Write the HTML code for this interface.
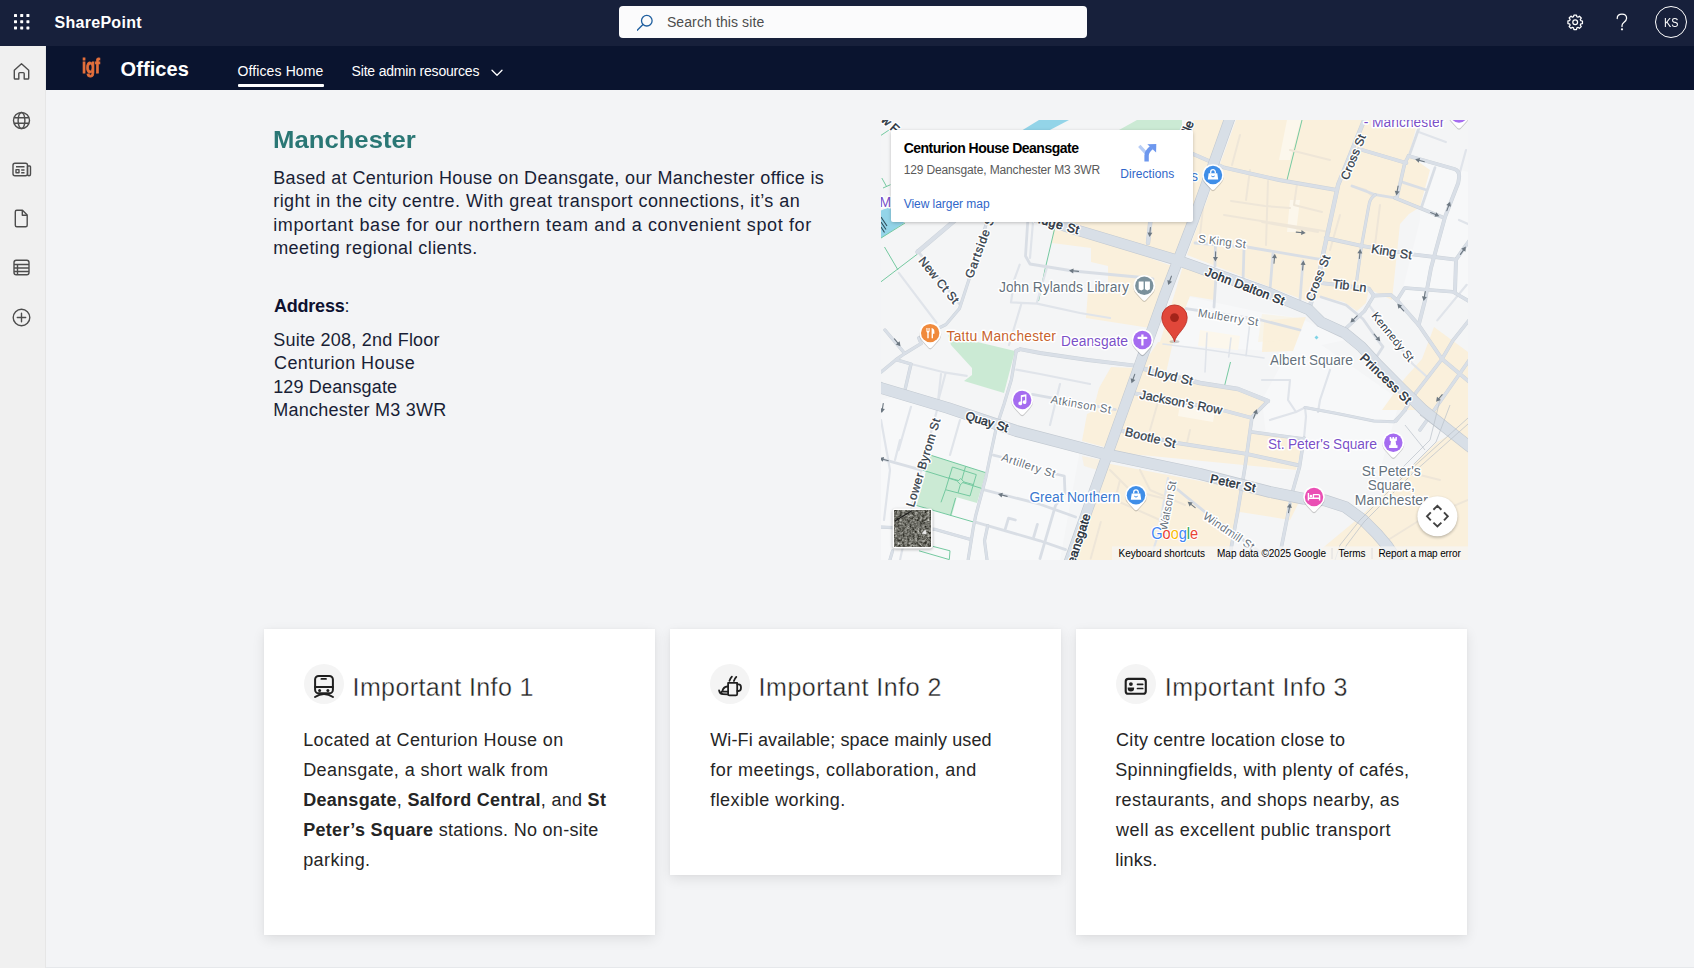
<!DOCTYPE html>
<html lang="en">
<head>
<meta charset="utf-8">
<title>Offices - Manchester</title>
<style>
*{box-sizing:border-box;margin:0;padding:0}
html,body{width:1694px;height:968px;overflow:hidden;background:#f3f4f6;font-family:"Liberation Sans",sans-serif;}
body{position:relative}
#top{position:absolute;left:0;top:0;width:1694px;height:46px;background:#17203b}
#hdr{position:absolute;left:46px;top:46px;width:1648px;height:43.500px;background:#0a142f}
#side{position:absolute;left:0;top:46px;width:46px;height:923px;background:#f0f0f0;border-right:1px solid #e6e6e6}
.t{position:absolute;white-space:nowrap}
.abs{position:absolute}
#search{position:absolute;left:619px;top:6px;width:468px;height:32px;background:#fbfbfc;border-radius:4px}
.card{position:absolute;background:#fff;box-shadow:0 4px 12px rgba(0,0,0,.09),0 0 3px rgba(0,0,0,.04)}
.ic{position:absolute;width:40px;height:40px;border-radius:50%;background:#f4f4f4}
#botline{position:absolute;left:46px;top:967px;width:1648px;height:1px;background:#e6e8eb}
</style>
</head>
<body>
<div id="top">
  <svg class="abs" style="left:13px;top:13px" width="18" height="18" viewBox="0 0 18 18" fill="#fff">
    <rect x="1" y="1" width="3" height="3" rx=".6"/><rect x="7.2" y="1" width="3" height="3" rx=".6"/><rect x="13.4" y="1" width="3" height="3" rx=".6"/>
    <rect x="1" y="7.2" width="3" height="3" rx=".6"/><rect x="7.2" y="7.2" width="3" height="3" rx=".6"/><rect x="13.4" y="7.2" width="3" height="3" rx=".6"/>
    <rect x="1" y="13.4" width="3" height="3" rx=".6"/><rect x="7.2" y="13.4" width="3" height="3" rx=".6"/><rect x="13.4" y="13.4" width="3" height="3" rx=".6"/>
  </svg>
  <div id="search">
    <svg class="abs" style="left:18px;top:8px" width="17" height="17" viewBox="0 0 17 17" fill="none" stroke="#1f5f9f" stroke-width="1.3" stroke-linecap="round"><circle cx="9.800" cy="6.700" r="5.300"/><path d="M6 10.500 0 16.500"/></svg>
  </div>
  <svg class="abs" style="left:1565.600px;top:12.700px" width="18.400" height="18.400" viewBox="0 0 20 20" fill="none" stroke="#fff" stroke-width="1.35" stroke-linejoin="round">
    <path d="M8.6 2.2h2.8l.4 1.9 1.2.5 1.6-1.1 2 2-1.1 1.6.5 1.2 1.9.4v2.8l-1.9.4-.5 1.2 1.1 1.6-2 2-1.6-1.1-1.2.5-.4 1.9H8.600l-.4-1.9-1.200-.5-1.600 1.100-2-2 1.100-1.600-.5-1.200-1.900-.4V8.600l1.900-.4.5-1.200-1.100-1.600 2-2 1.600 1.100 1.200-.5z"/>
    <circle cx="10" cy="10" r="2.6"/>
  </svg>
  <svg class="abs" style="left:1616.300px;top:13px" width="12" height="18" viewBox="0 0 12 18" fill="none" stroke="#fff" stroke-width="1.250" stroke-linecap="round"><path d="M1.200 5.600C1.200 2.600 3.400 1.200 6 1.200C8.800 1.200 10.600 3 10.600 5.300C10.600 7.400 9.200 8.500 7.800 9.600C6.600 10.600 6 11.400 6 12.800V13.500"/><circle cx="6" cy="16.300" r=".5" /></svg>
  <div class="abs" style="left:1655px;top:6px;width:32px;height:32px;border-radius:50%;border:1.3px solid #fff"></div>
</div>
<div id="hdr">
  <div class="abs" style="left:191.500px;top:38px;width:86.500px;height:3px;background:#fff;border-radius:1px"></div>
  <svg class="abs" style="left:444.700px;top:23px" width="12" height="8" viewBox="0 0 12 8" fill="none" stroke="#fff" stroke-width="1.3" stroke-linecap="round" stroke-linejoin="round"><path d="M1 1.200 6 6.300 11 1.200"/></svg>
</div>
<div id="side">
  <svg class="abs" style="left:11px;top:14.5px" width="21" height="21" viewBox="0 0 21 21" fill="none" stroke="#4d4d4d" stroke-width="1.4" stroke-linejoin="round" stroke-linecap="round"><path d="M3.300 9.200 10.500 2.800 17.700 9.200V17.200a.8.800 0 0 1-.8.800H13.200V12.600a1 1 0 0 0-1-1H8.800a1 1 0 0 0-1 1V18H4.100a.8.800 0 0 1-.8-.8z"/></svg>
  <svg class="abs" style="left:11px;top:64.0px" width="21" height="21" viewBox="0 0 21 21" fill="none" stroke="#4d4d4d" stroke-width="1.4"><circle cx="10.500" cy="10.500" r="8"/><ellipse cx="10.500" cy="10.500" rx="3.400" ry="8"/><path d="M3 7.700h15M3 13.300h15"/></svg>
  <svg class="abs" style="left:11px;top:112.5px" width="21" height="21" viewBox="0 0 21 21" fill="none" stroke="#4d4d4d" stroke-width="1.4" stroke-linejoin="round"><rect x="2" y="4.200" width="14.500" height="12.600" rx="2"/><path d="M16.500 7v8.300a1.500 1.500 0 0 0 3 0V7.800a.8.800 0 0 0-.8-.8z" /><path d="M5 7.800h8.500M10.200 11h3.300M10.200 13.800h3.300"/><rect x="5" y="10.600" width="3" height="3.200"/></svg>
  <svg class="abs" style="left:11px;top:162.0px" width="21" height="21" viewBox="0 0 21 21" fill="none" stroke="#4d4d4d" stroke-width="1.4" stroke-linejoin="round"><path d="M5.800 2.300h5.700l4.700 4.700v10.200a1.500 1.500 0 0 1-1.500 1.500H5.800a1.500 1.500 0 0 1-1.500-1.500V3.800a1.500 1.500 0 0 1 1.500-1.500z"/><path d="M11.300 2.500V7.200h4.700"/></svg>
  <svg class="abs" style="left:11px;top:211.0px" width="21" height="21" viewBox="0 0 21 21" fill="none" stroke="#4d4d4d" stroke-width="1.4" stroke-linejoin="round"><rect x="3" y="3.200" width="15" height="14.600" rx="2.200"/><path d="M3 7.500h15M3 11h15M3 14.500h15M6.500 7.500v10.300"/></svg>
  <svg class="abs" style="left:11px;top:260.5px" width="21" height="21" viewBox="0 0 21 21" fill="none" stroke="#4d4d4d" stroke-width="1.4" stroke-linecap="round"><circle cx="10.500" cy="10.500" r="8.300"/><path d="M10.500 6.300v8.400M6.300 10.500h8.400"/></svg>
</div>
<div id="botline"></div>
<div class="card" style="left:263.5px;top:628.5px;width:391px;height:306px"></div>
<div class="card" style="left:669.5px;top:628.5px;width:391.700px;height:246.500px"></div>
<div class="card" style="left:1076px;top:628.5px;width:391.300px;height:306px"></div>
<div class="ic" style="left:303.700px;top:664px"></div>
<div class="ic" style="left:710px;top:664.100px"></div>
<div class="ic" style="left:1116.100px;top:664.100px"></div>
<svg class="abs" style="left:881px;top:120px" width="587" height="440" viewBox="881 120 587 440" font-family="Liberation Sans, sans-serif">
<defs>
  <clipPath id="mc"><rect x="881" y="120" width="587" height="440"/></clipPath>
  <g id="arw"><path d="M-4.500 0H2" fill="none" stroke="#6d7882" stroke-width="1.100" stroke-linecap="round"/><path d="M.6-2.500 5 0 .6 2.500Z" fill="#6d7882"/></g>
  <path id="pinp" d="M0-10.800A10.800 10.800 0 0 1 7.600 7.700L1.600 14.300Q0 15.900-1.600 14.300L-7.600 7.700A10.800 10.800 0 0 1 0-10.800Z"/>
</defs>
<g clip-path="url(#mc)">
<rect x="881" y="120" width="587" height="440" fill="#f4f5f6"/>
<!-- whiter blocks -->
<g fill="#f7f8f9">
  <path d="M1185 296 1264 313 1300 318 1345 340 1290 352 1170 345Z"/>
  <path d="M1300 330 1400 400 1380 470 1270 470 1262 400Z"/>
  <path d="M900 395 1080 450 1060 560 881 560 881 400Z"/>
  <path d="M1420 160 1468 172 1468 300 1400 300 1420 220Z"/>
</g>
<!-- beige commercial -->
<g fill="#faf0dc">
  <!-- north of Bridge St / west of Deansgate (mostly behind card) -->
  <path d="M1075 131 1193 131 1193 120 1230 120 1180 258 1070 222Z"/>
  <!-- big NE block -->
  <path d="M1236 120 1418 120 1409 155 1430 170 1420 207 1409 214 1400 224 1392 300 1369 289 1366 303 1357 311 1344 302 1321 297 1309 302 1187 255Z"/>
  <!-- south of Bridge St, west of Deansgate -->
  <path d="M1053 230 1078 232 1172 266 1150 328 1086 318 1088 290 1108 285 1108 266 1091 262 1091 248 1052 243Z"/>
  <!-- east of Deansgate below John Dalton -->
  <path d="M1183 266 1216 279 1214 300 1190 296 1172 342 1160 342Z"/>
  <path d="M1270 320 1306 317 1293 351 1262 352 1264 322Z"/>
  <path d="M1262 314 1300 318 1296 340 1258 342Z" opacity=".55"/>
  <!-- strip west of Deansgate, Lloyd St to Quay St -->
  <path d="M1111 367 1136 368 1108 448 1082 441 1087 414 1093 411 1099 388Z"/>
  <path d="M1082 456 1102 460 1097 470 1084 466Z" opacity=".7"/>
  <!-- east of Deansgate between Lloyd St and Peter St -->
  <path d="M1158 342 1173 342 1166 373 1200 383 1238 389 1268 401 1252 418 1250 431 1304 439 1296 470 1110 452 1142 366Z"/>
  <!-- Great Northern south of Peter St -->
  <path d="M1100 462 1300 500 1290 520 1240 512 1228 560 1070 560Z"/>
  <!-- SE -->
  <path d="M1437 442 1468 425 1468 560 1310 560 1325 546 1360 517Z"/>
  <path d="M1434 327 1468 352 1468 440 1424 410 1382 410 1405 378 1422 359Z"/>
  <path d="M1416 392 1468 440 1468 420 1430 395Z"/>
</g>
<!-- lighter patches in beige -->
<g fill="#fcf7ec">
  <path d="M1287 120 1301 120 1290 160 1279 160Z"/>
  <path d="M1290 200 1300 200 1296 232 1287 232Z"/>
  <path d="M1200 330 1240 336 1238 350 1198 346Z"/>
  <path d="M1180 404 1215 410 1213 422 1178 416Z"/>
</g>
<!-- parks -->
<g fill="#cbead4">
  <path d="M1119 130 1137 120 1182 120 1182 130Z"/>
  <path d="M948 335 1015 351 1004 393 964 381 972 375 972 368 951 345Z"/>
  <path d="M930.400 455.100 985.800 472.700 977 503 956.800 497.300 951.800 515.600 916.500 505.500Z"/>
</g>
<!-- water -->
<g fill="#93d4e8">
  <path d="M1039 120 1069 120 1048 131 1021 131Z"/>
  <path d="M880 211 894 205 904 223 880 239Z"/>
</g>
<path d="M881 217 887 226M881 222 886 229.500M881 227 884.500 232.500" stroke="#2f4d5c" stroke-width="1.100" fill="none"/>
<!-- green paths -->
<g fill="none" stroke="#74c9a0" stroke-width="1">
  <path d="M930.400 455.100 985.800 472.700M916.500 505.500 973.200 521.900M922.800 470.200 982 488.500M952.400 467 976.300 474.600 970 496 945.500 489.700ZM965.600 466.400 958 492.900M948.600 477.800 973.800 484.700M945.500 489.700 941 502.300M955.600 498 950.500 515.600M919 550.800 949.300 559.600 950 550.800 933 546.400"/>
  <path d="M957.500 481.600 960.600 478.500 963.700 481.600 960.600 484.700Z" fill="#cbead4"/>
  <path d="M1302 120 1287 180M1054.500 229 1045.200 268.700 1038.500 301M880 136 889 130M880 282.500 917.500 254M884.500 247 898 270M881.800 178 886.800 187M883 188 890.500 184.700M881 238 905 223M1230.500 362 1224.500 386"/>
</g>
<!-- tier 3: thin light -->
<g fill="none" stroke="#e0e4ea" stroke-width="2.200" stroke-linecap="round" stroke-linejoin="round">
  <path d="M941 374 937 410 925 455 912 505 900 560"/>
  <path d="M900 440 895 460M911 406.800 898.600 450M945.700 372.700 938.200 400.600M911 364 945.700 372.700 966.700 375.800M1016.300 369.700 1040 374 1090 384"/>
  <path d="M1369 305 1412.500 363.800 1428 377.700"/>
  <path d="M1466.700 284.800 1437.300 320.400M1418.700 132 1445.800 142M1459 220 1468 224M1466 150 1460 172"/>
  <path d="M1305 407.500 1306 416.700 1303.500 443.500M1290 380 1288 400 1296 412 1305 407.500M1296 412 1270 420M1330 370 1320 400 1318 412M1262 380 1290 380"/>
  <path d="M1168 478 1158 535 1150 560"/>
  <path d="M1163 344 1202.500 349 1264 358M1207 333 1205 372M1231 338 1228.700 357M1250 322 1246 356" stroke-width="1.600"/>
  <path d="M1019.700 264.700 1014.300 279.500 1011 302.300 1037 303.600 1080 313 1110 318M1046.600 268.700 1037 302.300M1021 305 1009 345M898.800 272.800 936.400 322.500M1033 222 1030 258"/>
  <path d="M881 420 890 470 884 520M960 420 950 455M1060 384 1050 425"/>
</g>
<g fill="none" stroke="#eee6d8" stroke-width="2" stroke-linecap="round" stroke-linejoin="round">
  <path d="M1231 201 1265 206 1290 208M1224 215 1330 232M1268 181 1266 245M1297 184 1294 205 1322 212M1250 170 1246 200M1240 135 1232 165M1330 160 1290 150M1205 190 1200 235M1262 222 1318 232"/>
  <path d="M1352 186 1366 190 1372 196M1340 215 1330 250M1380 205 1375 245"/>
  <path d="M1110 470 1130 490 1170 500M1120 480 1115 500 1160 520M1100.800 522 1090.700 558.500M1140 470 1150 490 1185 505M1190 430 1187 443M1160 395 1150 430"/>
  <path d="M1400 470 1440 480M1420 520 1468 500M1380 545 1420 520"/>
</g>
<!-- tier 2.5 -->
<g fill="none" stroke="#d9dee5" stroke-width="2.800" stroke-linecap="round" stroke-linejoin="round">
  <path d="M881.300 458.900 921.600 470.200M983.300 489.700 1040 504.200 1075.600 517M974.500 521.900 1040 540.800 1065.500 549.600"/>
  <path d="M1015.400 520 1008.500 518.100 1005.300 528.800M1037.400 524.400 1033.700 537M993.400 455.100 1001 457M1055.800 474 1064.300 476 1065 493 1055.500 505.500 1040 558.500"/>
  <path d="M1032.400 394.400 1115.400 409.600"/>
  <path d="M1195 243 1247 247 1315.500 258.600 1325 260"/>
  <path d="M1215.500 243 1215 266M1244 249 1243 282M1273 253 1270 290M1303 261 1300 300"/>
  <path d="M1186 308.600 1261 320 1300 330"/>
  <path d="M1321 297 1346 305 1363 319 1377 339 1383 346.800 1377 356"/>
  <path d="M1403 182.300 1426.500 190M1435 167.600 1421.800 206.300M1418.700 128.800 1409.400 155"/>
  <path d="M1172 485 1205 512 1260 552"/>
  <path d="M917.500 250.700 959.500 304"/>
  <path d="M1027.700 222 1025.500 256 1030 264 1073 271 1137 277 1153 279"/>
  <path d="M1216 276 1214 307M1352 186 1375.300 194.700 1394.700 197.800"/>
</g>
<!-- tier 2 -->
<g fill="none" stroke="#cbd2d9" stroke-width="3.87" stroke-linecap="round" stroke-linejoin="round">
  <path d="M1365 118 1338.200 184.600 1323.400 252.800 1318 280 1310 306" stroke-width="4.4"/>
  <path d="M1170 150 1193 154 1224.500 167.700 1279 180 1336.600 190"/>
  <path d="M1359 149 1406.300 163M1408.600 156 1454.300 169Q1460 171 1459 178L1458.200 183 1445 217 1431 268 1425 300.300 1418.700 325"/>
  <path d="M1408.600 156 1404.800 163 1397 197M1394.700 197.800 1442 217" stroke-width="3.52"/>
  <path d="M1375.300 194.700Q1370 198 1369 204.800L1361.400 246.600 1356.800 280" stroke-width="3.08"/>
  <path d="M1325.800 238 1361.400 245.800 1412.500 254.300 1456 259.700 1465 246.600 1470 240M1456 259.700 1455 291.800"/>
  <path d="M1322 283.200 1369 288.700 1373.800 295.600 1390.800 294.900 1397 300.300 1418.700 325 1442 359 1470 382.400"/>
  <path d="M1373.800 295.600 1364.500 311 1344.400 329.700M1397 300.300 1404.800 287.900 1452.800 291.800 1470 301.800" stroke-width="3.52"/>
  <path d="M1442 359 1415.600 393.200 1404.800 410 1396 421M1470 319 1452.800 340.600 1442 359M1470 359 1434.200 410 1420 430" stroke-width="3.52"/>
  <path d="M1150.500 220 1148 243" stroke-width="4.4"/>
  <path d="M1016 351 1020 349.200 1040 353 1088 360 1133 365.400"/>
  <path d="M1020 349.200 1016.300 351 1011.400 379.600 1004 404.300 996.500 426.700 991.500 450 985.800 477.800 975.700 515.600 973.200 528.200 968.200 559.600" stroke-width="3.17"/>
  <path d="M1142.500 368.500 1200 383 1238 389 1268 401" stroke-width="4.4"/>
  <path d="M1268 401 1252 417 1245 467 1238 510 1229 560" stroke-width="3.52"/>
  <path d="M1134.800 393.300 1222 410 1252 418"/>
  <path d="M1122.400 431 1177 443 1245 453.600 1297 465"/>
  <path d="M1252 432 1304 439M1304 438 1299.500 467 1293 490" stroke-width="3.52"/>
  <path d="M1305 407.500 1337 413.400 1373.800 421 1393.800 421.800 1405.600 410" stroke-width="3.08"/>
  <path d="M1290 503.800 1281.700 545.600 1279 560" stroke-width="3.52"/>
  <path d="M885 330 904.800 353.500M921 343.600 904.800 353.500 896 359.700 881.200 372M896 359.700 911 364 904.800 390.700" stroke-width="3.34"/>
  <path d="M986.800 222 969.800 277 959.500 308.600 946 324.500 918.600 338 921 343.600" stroke-width="3.08"/>
  <path d="M960 216 917.500 252" stroke-width="4.4"/>
  <path d="M880 527 935.400 529.400 970.700 539.500M987.700 525.600 984.500 540.800 987 559.600M892.600 550.800 890 559.600" stroke-width="3.17"/>
</g>
<g fill="none" stroke="#d9dfe7" stroke-width="3.08" stroke-linecap="round" stroke-linejoin="round">
  <path d="M1365 118 1338.200 184.600 1323.400 252.800 1318 280 1310 306" stroke-width="3.61"/>
  <path d="M1170 150 1193 154 1224.500 167.700 1279 180 1336.600 190"/>
  <path d="M1359 149 1406.300 163M1408.600 156 1454.300 169Q1460 171 1459 178L1458.200 183 1445 217 1431 268 1425 300.300 1418.700 325"/>
  <path d="M1408.600 156 1404.800 163 1397 197M1394.700 197.800 1442 217" stroke-width="2.73"/>
  <path d="M1375.300 194.700Q1370 198 1369 204.800L1361.400 246.600 1356.800 280" stroke-width="2.29"/>
  <path d="M1325.800 238 1361.400 245.800 1412.500 254.300 1456 259.700 1465 246.600 1470 240M1456 259.700 1455 291.800"/>
  <path d="M1322 283.200 1369 288.700 1373.800 295.600 1390.800 294.900 1397 300.300 1418.700 325 1442 359 1470 382.400"/>
  <path d="M1373.800 295.600 1364.500 311 1344.400 329.700M1397 300.300 1404.800 287.900 1452.800 291.800 1470 301.800" stroke-width="2.73"/>
  <path d="M1442 359 1415.600 393.200 1404.800 410 1396 421M1470 319 1452.800 340.600 1442 359M1470 359 1434.200 410 1420 430" stroke-width="2.73"/>
  <path d="M1150.500 220 1148 243" stroke-width="3.61"/>
  <path d="M1016 351 1020 349.200 1040 353 1088 360 1133 365.400"/>
  <path d="M1020 349.200 1016.300 351 1011.400 379.600 1004 404.300 996.500 426.700 991.500 450 985.800 477.800 975.700 515.600 973.200 528.200 968.200 559.600" stroke-width="2.38"/>
  <path d="M1142.500 368.500 1200 383 1238 389 1268 401" stroke-width="3.61"/>
  <path d="M1268 401 1252 417 1245 467 1238 510 1229 560" stroke-width="2.73"/>
  <path d="M1134.800 393.300 1222 410 1252 418"/>
  <path d="M1122.400 431 1177 443 1245 453.600 1297 465"/>
  <path d="M1252 432 1304 439M1304 438 1299.500 467 1293 490" stroke-width="2.73"/>
  <path d="M1305 407.500 1337 413.400 1373.800 421 1393.800 421.800 1405.600 410" stroke-width="2.29"/>
  <path d="M1290 503.800 1281.700 545.600 1279 560" stroke-width="2.73"/>
  <path d="M885 330 904.800 353.500M921 343.600 904.800 353.500 896 359.700 881.200 372M896 359.700 911 364 904.800 390.700" stroke-width="2.55"/>
  <path d="M986.800 222 969.800 277 959.500 308.600 946 324.500 918.600 338 921 343.600" stroke-width="2.29"/>
  <path d="M960 216 917.500 252" stroke-width="3.61"/>
  <path d="M880 527 935.400 529.400 970.700 539.500M987.700 525.600 984.500 540.800 987 559.600M892.600 550.800 890 559.600" stroke-width="2.38"/>
</g>
<!-- tier 1 arterials -->
<g fill="none" stroke="#c2c9d1" stroke-width="11.2" stroke-linejoin="round">
  <path d="M1232 112 1193.500 220 1163.700 297.500 1139.500 365 1087.500 510 1067 568" stroke-width="11.0"/>
  <path d="M1000 205 1080 231 1177.600 260.300 1270 293.300 1290 301.800 1308.700 309.600Q1315 316 1321 322L1344.400 332.800 1361.400 346.800 1378.400 365.300 1401.700 388.600 1423.400 410 1467.500 445 1480 455" stroke-width="11.2"/>
  <path d="M870 384 881 388 948 408 1016.400 431 1104 453.800 1200 474 1270 492 1303.500 498.700 1325 500.400 1345.300 507 1363.700 520.500 1377 533.900 1387 545.600 1400 565" stroke-width="11.7"/>
</g>
<g fill="none" stroke="#d8dfe7" stroke-width="10" stroke-linejoin="round">
  <path d="M1232 112 1193.500 220 1163.700 297.500 1139.500 365 1087.500 510 1067 568" stroke-width="9.800"/>
  <path d="M1000 205 1080 231 1177.600 260.300 1270 293.300 1290 301.800 1308.700 309.600Q1315 316 1321 322L1344.400 332.800 1361.400 346.800 1378.400 365.300 1401.700 388.600 1423.400 410 1467.500 445 1480 455" stroke-width="10"/>
  <path d="M870 384 881 388 948 408 1016.400 431 1104 453.800 1200 474 1270 492 1303.500 498.700 1325 500.400 1345.300 507 1363.700 520.500 1377 533.900 1387 545.600 1400 565" stroke-width="10.500"/>
</g>
<!-- tram lines -->
<g fill="none" stroke="#b9c0c8" stroke-width=".7">
  <path d="M1468 418 1410 470 1360 520 1340 545 1335 560M1468 424 1414 472 1364 522 1346 546 1342 560M1440 400 1430 440 1395 475M1450 405 1436 442 1400 478M1420 415 1440 430M1405 425 1425 450"/>
</g>
<use href="#arw" transform="translate(1150,232) rotate(95)"/>
<use href="#arw" transform="translate(1074,271) rotate(185)"/>
<use href="#arw" transform="translate(1169.9,280.4) rotate(110)"/>
<use href="#arw" transform="translate(1215.5,256.4) rotate(92)"/>
<use href="#arw" transform="translate(1274.4,258.7) rotate(-85)"/>
<use href="#arw" transform="translate(1300.7,232.5) rotate(5)"/>
<use href="#arw" transform="translate(1303,265.5) rotate(-85)"/>
<use href="#arw" transform="translate(1359.8,254) rotate(-85)"/>
<use href="#arw" transform="translate(1420,160.5) rotate(195)"/>
<use href="#arw" transform="translate(1397.3,190.5) rotate(100)"/>
<use href="#arw" transform="translate(1434.8,214.3) rotate(22)"/>
<use href="#arw" transform="translate(1448.4,206.4) rotate(-70)"/>
<use href="#arw" transform="translate(1463,250.7) rotate(-55)"/>
<use href="#arw" transform="translate(1424.5,296) rotate(100)"/>
<use href="#arw" transform="translate(1400.7,307.5) rotate(228)"/>
<use href="#arw" transform="translate(1354,319) rotate(135)"/>
<use href="#arw" transform="translate(1377,337.5) rotate(50)"/>
<use href="#arw" transform="translate(1133.2,378.6) rotate(110)"/>
<use href="#arw" transform="translate(1002.8,495.2) rotate(195)"/>
<use href="#arw" transform="translate(884,459.5) rotate(195)"/>
<use href="#arw" transform="translate(897.3,342.4) rotate(50)"/>
<use href="#arw" transform="translate(882.5,408) rotate(100)"/>
<use href="#arw" transform="translate(1255.2,413.9) rotate(-70)"/>
<use href="#arw" transform="translate(1191.6,504.8) rotate(218)"/>
<use href="#arw" transform="translate(1289.3,508.2) rotate(-80)"/>
<use href="#arw" transform="translate(1439.3,398) rotate(130)"/>
<text transform="translate(1245,286) rotate(21)" y="4.4" text-anchor="middle" font-size="12.2" textLength="84" lengthAdjust="spacing" fill="#fff" paint-order="stroke" stroke="#fff" stroke-width="3" stroke-linejoin="round">John Dalton St</text>
<text transform="translate(1245,286) rotate(21)" y="4.4" text-anchor="middle" font-size="12.2" textLength="84" lengthAdjust="spacing" fill="#27313c" stroke="#27313c" stroke-width="0.45">John Dalton St</text>
<text transform="translate(987,421.5) rotate(17)" y="4.4" text-anchor="middle" font-size="12.2" textLength="44" lengthAdjust="spacing" fill="#fff" paint-order="stroke" stroke="#fff" stroke-width="3" stroke-linejoin="round">Quay St</text>
<text transform="translate(987,421.5) rotate(17)" y="4.4" text-anchor="middle" font-size="12.2" textLength="44" lengthAdjust="spacing" fill="#27313c" stroke="#27313c" stroke-width="0.45">Quay St</text>
<text transform="translate(1233,483) rotate(12)" y="4.4" text-anchor="middle" font-size="12.2" textLength="46" lengthAdjust="spacing" fill="#fff" paint-order="stroke" stroke="#fff" stroke-width="3" stroke-linejoin="round">Peter St</text>
<text transform="translate(1233,483) rotate(12)" y="4.4" text-anchor="middle" font-size="12.2" textLength="46" lengthAdjust="spacing" fill="#27313c" stroke="#27313c" stroke-width="0.45">Peter St</text>
<text transform="translate(1386,378.5) rotate(44)" y="4.4" text-anchor="middle" font-size="12.2" textLength="66" lengthAdjust="spacing" fill="#fff" paint-order="stroke" stroke="#fff" stroke-width="3" stroke-linejoin="round">Princess St</text>
<text transform="translate(1386,378.5) rotate(44)" y="4.4" text-anchor="middle" font-size="12.2" textLength="66" lengthAdjust="spacing" fill="#27313c" stroke="#27313c" stroke-width="0.45">Princess St</text>
<text transform="translate(1086.5,514) rotate(-72)" y="4.4" text-anchor="end" font-size="12.2" textLength="61" lengthAdjust="spacing" fill="#fff" paint-order="stroke" stroke="#fff" stroke-width="3" stroke-linejoin="round">Deansgate</text>
<text transform="translate(1086.5,514) rotate(-72)" y="4.4" text-anchor="end" font-size="12.2" textLength="61" lengthAdjust="spacing" fill="#27313c" stroke="#27313c" stroke-width="0.45">Deansgate</text>
<text transform="translate(1079,230) rotate(16)" y="4.4" text-anchor="end" font-size="12.2" textLength="55" lengthAdjust="spacing" fill="#fff" paint-order="stroke" stroke="#fff" stroke-width="3" stroke-linejoin="round">Bridge St</text>
<text transform="translate(1079,230) rotate(16)" y="4.4" text-anchor="end" font-size="12.2" textLength="55" lengthAdjust="spacing" fill="#27313c" stroke="#27313c" stroke-width="0.45">Bridge St</text>
<text transform="translate(1190,121) rotate(-68)" y="4.4" text-anchor="end" font-size="12.2" fill="#fff" paint-order="stroke" stroke="#fff" stroke-width="3" stroke-linejoin="round">Colville</text>
<text transform="translate(1190,121) rotate(-68)" y="4.4" text-anchor="end" font-size="12.2" fill="#27313c" stroke="#27313c" stroke-width="0.45">Colville</text>
<text transform="translate(890.5,124) rotate(42)" y="4.3" text-anchor="middle" font-size="12" fill="#fff" paint-order="stroke" stroke="#fff" stroke-width="3" stroke-linejoin="round">w F</text>
<text transform="translate(890.5,124) rotate(42)" y="4.3" text-anchor="middle" font-size="12" fill="#27313c" stroke="#27313c" stroke-width="0.45">w F</text>
<text transform="translate(1353,157) rotate(-68)" y="4.3" text-anchor="middle" font-size="12" textLength="48" lengthAdjust="spacing" fill="#fff" paint-order="stroke" stroke="#fff" stroke-width="3" stroke-linejoin="round">Cross St</text>
<text transform="translate(1353,157) rotate(-68)" y="4.3" text-anchor="middle" font-size="12" textLength="48" lengthAdjust="spacing" fill="#323d49" stroke="#323d49" stroke-width="0.28">Cross St</text>
<text transform="translate(1317.7,278) rotate(-69)" y="4.3" text-anchor="middle" font-size="12" textLength="48" lengthAdjust="spacing" fill="#fff" paint-order="stroke" stroke="#fff" stroke-width="3" stroke-linejoin="round">Cross St</text>
<text transform="translate(1317.7,278) rotate(-69)" y="4.3" text-anchor="middle" font-size="12" textLength="48" lengthAdjust="spacing" fill="#323d49" stroke="#323d49" stroke-width="0.28">Cross St</text>
<text transform="translate(1391.6,251.6) rotate(9)" y="4.5" text-anchor="middle" font-size="12.5" textLength="41" lengthAdjust="spacing" fill="#fff" paint-order="stroke" stroke="#fff" stroke-width="3" stroke-linejoin="round">King St</text>
<text transform="translate(1391.6,251.6) rotate(9)" y="4.5" text-anchor="middle" font-size="12.5" textLength="41" lengthAdjust="spacing" fill="#323d49" stroke="#323d49" stroke-width="0.28">King St</text>
<text transform="translate(1349.7,285.5) rotate(7)" y="4.5" text-anchor="middle" font-size="12.5" textLength="34" lengthAdjust="spacing" fill="#fff" paint-order="stroke" stroke="#fff" stroke-width="3" stroke-linejoin="round">Tib Ln</text>
<text transform="translate(1349.7,285.5) rotate(7)" y="4.5" text-anchor="middle" font-size="12.5" textLength="34" lengthAdjust="spacing" fill="#323d49" stroke="#323d49" stroke-width="0.28">Tib Ln</text>
<text transform="translate(1170.3,375.5) rotate(14)" y="4.5" text-anchor="middle" font-size="12.5" textLength="46" lengthAdjust="spacing" fill="#fff" paint-order="stroke" stroke="#fff" stroke-width="3" stroke-linejoin="round">Lloyd St</text>
<text transform="translate(1170.3,375.5) rotate(14)" y="4.5" text-anchor="middle" font-size="12.5" textLength="46" lengthAdjust="spacing" fill="#323d49" stroke="#323d49" stroke-width="0.28">Lloyd St</text>
<text transform="translate(1181,402) rotate(11)" y="4.5" text-anchor="middle" font-size="12.5" textLength="84" lengthAdjust="spacing" fill="#fff" paint-order="stroke" stroke="#fff" stroke-width="3" stroke-linejoin="round">Jackson's Row</text>
<text transform="translate(1181,402) rotate(11)" y="4.5" text-anchor="middle" font-size="12.5" textLength="84" lengthAdjust="spacing" fill="#323d49" stroke="#323d49" stroke-width="0.28">Jackson's Row</text>
<text transform="translate(1150.6,437.4) rotate(14)" y="4.5" text-anchor="middle" font-size="12.5" textLength="52" lengthAdjust="spacing" fill="#fff" paint-order="stroke" stroke="#fff" stroke-width="3" stroke-linejoin="round">Bootle St</text>
<text transform="translate(1150.6,437.4) rotate(14)" y="4.5" text-anchor="middle" font-size="12.5" textLength="52" lengthAdjust="spacing" fill="#323d49" stroke="#323d49" stroke-width="0.28">Bootle St</text>
<text transform="translate(923,462.5) rotate(-73)" y="4.3" text-anchor="middle" font-size="12" textLength="92" lengthAdjust="spacing" fill="#fff" paint-order="stroke" stroke="#fff" stroke-width="3" stroke-linejoin="round">Lower Byrom St</text>
<text transform="translate(923,462.5) rotate(-73)" y="4.3" text-anchor="middle" font-size="12" textLength="92" lengthAdjust="spacing" fill="#323d49" stroke="#323d49" stroke-width="0.28">Lower Byrom St</text>
<text transform="translate(939,280) rotate(51)" y="4.3" text-anchor="middle" font-size="12" textLength="56" lengthAdjust="spacing" fill="#fff" paint-order="stroke" stroke="#fff" stroke-width="3" stroke-linejoin="round">New Ct St</text>
<text transform="translate(939,280) rotate(51)" y="4.3" text-anchor="middle" font-size="12" textLength="56" lengthAdjust="spacing" fill="#323d49" stroke="#323d49" stroke-width="0.28">New Ct St</text>
<text transform="translate(968.5,277.5) rotate(-70)" y="4.3" text-anchor="start" font-size="12" textLength="68" lengthAdjust="spacing" fill="#fff" paint-order="stroke" stroke="#fff" stroke-width="3" stroke-linejoin="round">Gartside St</text>
<text transform="translate(968.5,277.5) rotate(-70)" y="4.3" text-anchor="start" font-size="12" textLength="68" lengthAdjust="spacing" fill="#323d49" stroke="#323d49" stroke-width="0.28">Gartside St</text>
<text transform="translate(1222,241.3) rotate(7)" y="4.1" text-anchor="middle" font-size="11.5" textLength="48" lengthAdjust="spacing" fill="#66717c" paint-order="stroke" stroke="#fff" stroke-width="3" stroke-linejoin="round">S King St</text>
<text transform="translate(1228.3,317.2) rotate(9)" y="4.1" text-anchor="middle" font-size="11.5" textLength="61" lengthAdjust="spacing" fill="#66717c" paint-order="stroke" stroke="#fff" stroke-width="3" stroke-linejoin="round">Mulberry St</text>
<text transform="translate(1081,404.2) rotate(10)" y="4.1" text-anchor="middle" font-size="11.5" textLength="61" lengthAdjust="spacing" fill="#66717c" paint-order="stroke" stroke="#fff" stroke-width="3" stroke-linejoin="round">Atkinson St</text>
<text transform="translate(1028.6,465.3) rotate(18)" y="4.1" text-anchor="middle" font-size="11.5" textLength="56" lengthAdjust="spacing" fill="#66717c" paint-order="stroke" stroke="#fff" stroke-width="3" stroke-linejoin="round">Artillery St</text>
<text transform="translate(1229,531) rotate(34)" y="4.1" text-anchor="middle" font-size="11.5" textLength="59" lengthAdjust="spacing" fill="#66717c" paint-order="stroke" stroke="#fff" stroke-width="3" stroke-linejoin="round">Windmill St</text>
<text transform="translate(1167.6,505.5) rotate(-79)" y="4.1" text-anchor="middle" font-size="11.5" textLength="50" lengthAdjust="spacing" fill="#66717c" paint-order="stroke" stroke="#fff" stroke-width="3" stroke-linejoin="round">Watson St</text>
<text transform="translate(1393,336.7) rotate(51)" y="4.1" text-anchor="middle" font-size="11.5" textLength="60" lengthAdjust="spacing" fill="#323d49" paint-order="stroke" stroke="#fff" stroke-width="3" stroke-linejoin="round">Kennedy St</text>
<text x="999" y="291.6" text-anchor="start" font-size="14" fill="#65717c" paint-order="stroke" stroke="#fff" stroke-width="3" stroke-linejoin="round" textLength="130" lengthAdjust="spacing">John Rylands Library</text>
<text x="946.5" y="340.6" text-anchor="start" font-size="14" fill="#c8632e" paint-order="stroke" stroke="#fff" stroke-width="3" stroke-linejoin="round" textLength="109.5" lengthAdjust="spacing">Tattu Manchester</text>
<text x="1061" y="346" text-anchor="start" font-size="14" fill="#7a4fc8" paint-order="stroke" stroke="#fff" stroke-width="3" stroke-linejoin="round" textLength="67" lengthAdjust="spacing">Deansgate</text>
<text x="1029.4" y="501.8" text-anchor="start" font-size="14" fill="#3a78cf" paint-order="stroke" stroke="#fff" stroke-width="3" stroke-linejoin="round" textLength="90.6" lengthAdjust="spacing">Great Northern</text>
<text x="1270" y="365.3" text-anchor="start" font-size="14" fill="#65717c" paint-order="stroke" stroke="#fff" stroke-width="3" stroke-linejoin="round" textLength="83" lengthAdjust="spacing">Albert Square</text>
<text x="1268" y="449.4" text-anchor="start" font-size="14" fill="#7a4fc8" paint-order="stroke" stroke="#fff" stroke-width="3" stroke-linejoin="round" textLength="109" lengthAdjust="spacing">St. Peter's Square</text>
<text x="1391.3" y="476.2" text-anchor="middle" font-size="14" fill="#65717c" paint-order="stroke" stroke="#fff" stroke-width="3" stroke-linejoin="round" textLength="59" lengthAdjust="spacing">St Peter's</text>
<text x="1391.3" y="490.4" text-anchor="middle" font-size="14" fill="#65717c" paint-order="stroke" stroke="#fff" stroke-width="3" stroke-linejoin="round" textLength="47" lengthAdjust="spacing">Square,</text>
<text x="1391.3" y="504.6" text-anchor="middle" font-size="14" fill="#65717c" paint-order="stroke" stroke="#fff" stroke-width="3" stroke-linejoin="round" textLength="73" lengthAdjust="spacing">Manchester</text>
<text x="1363.7" y="126.5" text-anchor="start" font-size="14" fill="#7a4fc8" paint-order="stroke" stroke="#fff" stroke-width="3" stroke-linejoin="round" textLength="80.6" lengthAdjust="spacing">- Manchester</text>
<text x="879.5" y="207" text-anchor="start" font-size="14" fill="#7a4fc8" paint-order="stroke" stroke="#fff" stroke-width="3" stroke-linejoin="round" textLength="11" lengthAdjust="spacing">M</text>
<text x="1191" y="181" text-anchor="start" font-size="14" fill="#3a78cf" paint-order="stroke" stroke="#fff" stroke-width="3" stroke-linejoin="round" textLength="7" lengthAdjust="spacing">s</text>
<g transform="translate(1459,113.5)"><use href="#pinp" fill="#000" opacity=".18" transform="translate(0,1.2)"/><use href="#pinp" fill="#fff"/><circle r="9.2" fill="#a56cf0"/></g>
<g transform="translate(1213,175)"><use href="#pinp" fill="#000" opacity=".18" transform="translate(0,1.2)"/><use href="#pinp" fill="#fff"/><circle r="9.2" fill="#3f8ee8"/><path d="M-4.300-1.800H4.300L5.200 4.600H-5.200Z" fill="#fff"/><path d="M-2.300-1.600V-3A2.300 2.300 0 0 1 2.300-3V-1.600" fill="none" stroke="#fff" stroke-width="1.300"/><path d="M-1.700 1Q0 2.800 1.700 1" fill="none" stroke="#3f8ee8" stroke-width="1"/></g>
<g transform="translate(1144.3,285.8)"><use href="#pinp" fill="#000" opacity=".18" transform="translate(0,1.2)"/><use href="#pinp" fill="#fff"/><circle r="9.2" fill="#7b919c"/><path d="M-5.600-4.200H-.7V3.400L-3 4.800-5.600 3.400ZM5.600-4.200H.7V3.400L3 4.800 5.600 3.400Z" fill="#fff"/></g>
<g transform="translate(930.2,333.1)"><use href="#pinp" fill="#000" opacity=".18" transform="translate(0,1.2)"/><use href="#pinp" fill="#fff"/><circle r="9.2" fill="#f08a3c"/><path d="M-3.800-5.200V-1.800A1.600 1.600 0 0 0-2.900-.4V5.200H-1.500V-.4A1.600 1.600 0 0 0-.6-1.800V-5.200H-1.400V-2H-1.900V-5.200H-2.600V-2H-3.100V-5.200ZM1.400 5.200V-5.200Q4.200-4.600 4.200-1.400V.6H2.800V5.200Z" fill="#fff"/></g>
<g transform="translate(1142.4,340)"><use href="#pinp" fill="#000" opacity=".18" transform="translate(0,1.2)"/><use href="#pinp" fill="#fff"/><circle r="9.2" fill="#a56cf0"/><path d="M-1.100-5.600H1.100V-3.200H4.200L5.300-2.100 4.200-1H1.100V5.400H-1.100V-1H-4.200L-5.300-2.100-4.200-3.200H-1.100Z" fill="#fff"/></g>
<g transform="translate(1022.2,400)"><use href="#pinp" fill="#000" opacity=".18" transform="translate(0,1.2)"/><use href="#pinp" fill="#fff"/><circle r="9.2" fill="#a56cf0"/><path d="M-1.400-4.800 4.200-5.800V2.200A1.900 1.900 0 1 1 2.900.4V-3.400L-.1-2.900V3.400A1.900 1.900 0 1 1-1.400 1.600Z" fill="#fff"/></g>
<g transform="translate(1136,495.2)"><use href="#pinp" fill="#000" opacity=".18" transform="translate(0,1.2)"/><use href="#pinp" fill="#fff"/><circle r="9.2" fill="#3f8ee8"/><path d="M-4.300-1.800H4.300L5.200 4.600H-5.200Z" fill="#fff"/><path d="M-2.300-1.600V-3A2.300 2.300 0 0 1 2.300-3V-1.600" fill="none" stroke="#fff" stroke-width="1.300"/><path d="M-1.700 1Q0 2.800 1.700 1" fill="none" stroke="#3f8ee8" stroke-width="1"/></g>
<g transform="translate(1393.3,442.7)"><use href="#pinp" fill="#000" opacity=".18" transform="translate(0,1.2)"/><use href="#pinp" fill="#fff"/><circle r="9.2" fill="#a56cf0"/><path d="M-3.600-5.600H-2.100V-4.300H-.8V-5.600H.8V-4.300H2.100V-5.600H3.600V-2.300L2.300-1.400 3 2.600H4.200V5.200H-4.200V2.600H-3L-2.300-1.400-3.600-2.300Z" fill="#fff"/></g>
<g transform="translate(1314,497)"><use href="#pinp" fill="#000" opacity=".18" transform="translate(0,1.2)"/><use href="#pinp" fill="#fff"/><circle r="9.2" fill="#ea4fb4"/><path d="M-5.600-4V3.600M-5.600 1.300H5.600V3.600M5.600 1.300V-1.300Q5.600-2.400 4.500-2.400H-.6V1.300" fill="none" stroke="#fff" stroke-width="1.400" stroke-linejoin="round"/><circle cx="-3.100" cy="-1" r="1.300" fill="#fff"/></g>
<path d="M1314.500 337.500 1316.500 335.500 1318.500 337.500 1316.500 339.500Z" fill="#7fd3e6"/>
<g transform="translate(1174.500,317.600)"><ellipse cx="0" cy="24" rx="5" ry="1.600" fill="#000" opacity=".18"/><path d="M0 24.200C-1.200 16.500-12.700 10.500-12.700 0A12.700 12.700 0 0 1 12.700 0C12.700 10.500 1.200 16.500 0 24.200Z" fill="#e1473a" stroke="#b5281f" stroke-width=".8"/><circle r="4.400" fill="#a3241a"/></g>
<!-- satellite thumb -->
<defs>
  <filter id="sat" x="0" y="0" width="100%" height="100%" color-interpolation-filters="sRGB"><feTurbulence type="fractalNoise" baseFrequency=".4" numOctaves="3" seed="7" result="n"/><feColorMatrix in="n" type="matrix" values=".55 .55 .55 0 -.4  .55 .55 .55 0 -.4  .55 .55 .55 0 -.43  0 0 0 0 1"/><feGaussianBlur stdDeviation=".35"/></filter>
  <filter id="sh" x="-30%" y="-30%" width="160%" height="160%"><feGaussianBlur stdDeviation="1.600"/></filter>
</defs>
<rect x="892.600" y="509.400" width="40" height="40" rx="3" fill="#000" opacity=".3" filter="url(#sh)"/>
<rect x="892.600" y="508.600" width="40" height="40" rx="3" fill="#fff"/>
<rect x="894.400" y="510.400" width="36.400" height="36.400" rx="1.500" fill="#77796f"/>
<rect x="894.400" y="510.400" width="36.400" height="36.400" rx="1.500" filter="url(#sat)"/>
<path d="M895 521 912 510.600" stroke="#1a1a1a" stroke-width="1.100" fill="none"/>
<path d="M921.500 533.500 925.500 529.500 926.500 534.500Z" fill="#e8e8e8"/>
<!-- camera control button -->
<circle cx="1437.400" cy="517.600" r="20" fill="#000" opacity=".28" filter="url(#sh)"/>
<circle cx="1437.400" cy="516.300" r="20" fill="#fff"/>
<g transform="translate(1437.400,516.300)" fill="none" stroke="#424242" stroke-width="1.900" stroke-linejoin="miter">
  <path d="M-4-6.600 0-10.400 4-6.600M-4 6.300 0 10.100 4 6.300M-6.600-4-10.400 0-6.600 4M6.600-4 10.400 0 6.600 4"/>
</g>
<!-- Google logo -->
<text x="1151.200" y="538.600" font-size="16.500" textLength="47" lengthAdjust="spacingAndGlyphs" paint-order="stroke" stroke="#fff" stroke-width="2.200" stroke-linejoin="round"><tspan fill="#4285f4">G</tspan><tspan fill="#ea4335">o</tspan><tspan fill="#fbbc05">o</tspan><tspan fill="#4285f4">g</tspan><tspan fill="#34a853">l</tspan><tspan fill="#ea4335">e</tspan></text>
<!-- attribution -->
<rect x="1112" y="546.400" width="356" height="14" fill="#f5f5f5" opacity=".72"/>
<g font-size="10" fill="#000">
  <text x="1118.500" y="556.500" textLength="86.500" lengthAdjust="spacing">Keyboard shortcuts</text>
  <text x="1217" y="556.500" textLength="109" lengthAdjust="spacing">Map data ©2025 Google</text>
  <text x="1338.600" y="556.500" textLength="26.800" lengthAdjust="spacing">Terms</text>
  <text x="1378.500" y="556.500" textLength="82.300" lengthAdjust="spacing">Report a map error</text>
</g>
<path d="M1332 548V559M1372 548V559" stroke="#d8d8d8" stroke-width=".8"/>
</g>
</svg>
<div class="abs" style="left:891px;top:130px;width:302px;height:91.500px;background:#fff;border-radius:2px;box-shadow:0 1px 4px -1px rgba(0,0,0,.35)"></div>
<svg class="abs" style="left:1136px;top:142px" width="22" height="22" viewBox="1136 142 22 22">
  <path d="M1139.300 145.800 1145.800 152.800" stroke="#b7cdf6" stroke-width="3.200" fill="none"/>
  <path d="M1146.600 161.400V155.500Q1146.600 151.500 1151.500 147.600" stroke="#6d97ee" stroke-width="4.400" fill="none"/>
  <path d="M1147.300 144.300 1156.300 143.900 1156.100 152.600Z" fill="#6d97ee"/>
</svg>
<svg class="abs" style="left:303.700px;top:664px" width="40" height="40" viewBox="0 0 40 40" fill="none" stroke="#1f1f1f" stroke-width="2" stroke-linecap="round" stroke-linejoin="round">
  <rect x="11.100" y="12" width="17.800" height="17.300" rx="3.600"/>
  <path d="M11.100 22.900H28.900"/>
  <path d="M17.400 14.900h4.600" stroke-width="1.800"/>
  <circle cx="15.600" cy="26.400" r="1.500" fill="#1f1f1f" stroke="none"/><circle cx="23.900" cy="26.400" r="1.500" fill="#1f1f1f" stroke="none"/>
  <path d="M11 33Q20 27 29 33"/>
</svg>
<svg class="abs" style="left:710px;top:664.100px" width="40" height="40" viewBox="0 0 40 40" fill="none" stroke="#1f1f1f" stroke-width="1.800" stroke-linecap="round" stroke-linejoin="round">
  <path d="M18.100 18.900H27.200V30Q27.200 31.400 25.800 31.400H19.500Q18.100 31.400 18.100 30Z"/>
  <path d="M27.400 20.300h1.200Q31 20.300 31 23.600Q31 27 28.600 27H27.400"/>
  <path d="M21.900 12.700Q20.200 14.500 19.500 16.800M26.300 12.900Q24.600 14.700 23.900 17"/>
  <path d="M12.300 27.200Q13.300 22.800 17.400 22.500M11.700 27.600H17.400M9.100 26.500Q9.700 30 13 30.200L17.400 30.400"/>
</svg>
<svg class="abs" style="left:1116.100px;top:664.100px" width="40" height="40" viewBox="0 0 40 40" fill="none" stroke="#1f1f1f" stroke-width="2.100" stroke-linecap="round" stroke-linejoin="round">
  <rect x="9.700" y="14.900" width="20.100" height="14.900" rx="2.600"/>
  <circle cx="14.900" cy="20.100" r="1.900" fill="#1f1f1f" stroke="none"/>
  <path d="M11.700 23.400H18.100V24.200A3.200 3.300 0 0 1 11.700 24.200Z" fill="#1f1f1f" stroke="none"/>
  <path d="M21.500 20.300H26.700M21.500 24.500H26.700" stroke-width="1.700"/>
</svg>
<div class="t" id="sp" style="left:54.5px;top:12px;font-size:16px;line-height:21px;color:#fff;font-weight:700;letter-spacing:0.287px;">SharePoint</div>
<div class="t" id="srch" style="left:666.9px;top:13px;font-size:14px;line-height:18px;color:#4d4d4d;letter-spacing:0.108px;">Search this site</div>
<div class="t" id="ks" style="left:1663.8px;top:14px;font-size:13.5px;line-height:18px;color:#fff;transform:scaleX(.8);transform-origin:0 0;">KS</div>
<div class="t" id="igf" style="left:81.5px;top:52px;font-size:21px;line-height:27px;color:#e5703c;font-weight:700;transform:scaleX(.70);transform-origin:0 0;-webkit-text-stroke:.9px #e5703c;">igf</div>
<div class="t" id="off" style="left:120.5px;top:56px;font-size:20px;line-height:26px;color:#fff;font-weight:700;letter-spacing:0.106px;">Offices</div>
<div class="t" id="n1" style="left:237.5px;top:62px;font-size:14px;line-height:18px;color:#fff;letter-spacing:0.118px;">Offices Home</div>
<div class="t" id="n2" style="left:351.6px;top:62px;font-size:14px;line-height:18px;color:#fff;letter-spacing:-0.191px;">Site admin resources</div>
<div class="t" id="h1" style="left:273.0px;top:124px;font-size:24px;line-height:31px;color:#2a7775;font-weight:700;transform:scaleX(1.0705);transform-origin:0 0;">Manchester</div>
<div class="t" id="b1" style="left:273.2px;top:167px;font-size:18px;line-height:23px;color:#191e35;letter-spacing:0.349px;">Based at Centurion House on Deansgate, our Manchester office is</div>
<div class="t" id="b2" style="left:273.2px;top:190px;font-size:18px;line-height:23px;color:#191e35;letter-spacing:0.449px;">right in the city centre. With great transport connections, it&rsquo;s an</div>
<div class="t" id="b3" style="left:273.2px;top:214px;font-size:18px;line-height:23px;color:#191e35;letter-spacing:0.618px;">important base for our northern team and a convenient spot for</div>
<div class="t" id="b4" style="left:273.2px;top:237px;font-size:18px;line-height:23px;color:#191e35;letter-spacing:0.416px;">meeting regional clients.</div>
<div class="t" id="ad" style="left:274.0px;top:295px;font-size:18px;line-height:23px;color:#191e35;letter-spacing:-0.220px;"><b style="color:#0e1230">Address</b>:</div>
<div class="t" id="a1" style="left:273.2px;top:329px;font-size:18px;line-height:23px;color:#191e35;letter-spacing:0.225px;">Suite 208, 2nd Floor</div>
<div class="t" id="a2" style="left:274.0px;top:352px;font-size:18px;line-height:23px;color:#191e35;letter-spacing:0.407px;">Centurion House</div>
<div class="t" id="a3" style="left:273.2px;top:376px;font-size:18px;line-height:23px;color:#191e35;letter-spacing:0.151px;">129 Deansgate</div>
<div class="t" id="a4" style="left:273.2px;top:399px;font-size:18px;line-height:23px;color:#191e35;letter-spacing:0.245px;">Manchester M3 3WR</div>
<div class="t" id="c1t" style="left:352.6px;top:671px;font-size:25px;line-height:32px;color:#222;letter-spacing:0.380px;-webkit-text-stroke:.35px #fff;">Important Info 1</div>
<div class="t" id="c2t" style="left:758.6px;top:671px;font-size:25px;line-height:32px;color:#222;letter-spacing:0.516px;-webkit-text-stroke:.35px #fff;">Important Info 2</div>
<div class="t" id="c3t" style="left:1164.7px;top:671px;font-size:25px;line-height:32px;color:#222;letter-spacing:0.516px;-webkit-text-stroke:.35px #fff;">Important Info 3</div>
<div class="t" id="c1a" style="left:303.2px;top:729px;font-size:18px;line-height:23px;color:#252525;letter-spacing:0.390px;">Located at Centurion House on</div>
<div class="t" id="c1b" style="left:303.2px;top:759px;font-size:18px;line-height:23px;color:#252525;letter-spacing:0.400px;">Deansgate, a short walk from</div>
<div class="t" id="c1c" style="left:303.2px;top:789px;font-size:18px;line-height:23px;color:#252525;letter-spacing:0.291px;"><b>Deansgate</b>, <b>Salford Central</b>, and <b>St</b></div>
<div class="t" id="c1d" style="left:303.2px;top:819px;font-size:18px;line-height:23px;color:#252525;letter-spacing:0.294px;"><b>Peter&rsquo;s Square</b> stations. No on-site</div>
<div class="t" id="c1e" style="left:303.2px;top:849px;font-size:18px;line-height:23px;color:#252525;letter-spacing:0.407px;">parking.</div>
<div class="t" id="c2a" style="left:710.2px;top:729px;font-size:18px;line-height:23px;color:#252525;letter-spacing:0.131px;">Wi-Fi available; space mainly used</div>
<div class="t" id="c2b" style="left:710.2px;top:759px;font-size:18px;line-height:23px;color:#252525;letter-spacing:0.481px;">for meetings, collaboration, and</div>
<div class="t" id="c2c" style="left:710.2px;top:789px;font-size:18px;line-height:23px;color:#252525;letter-spacing:0.439px;">flexible working.</div>
<div class="t" id="c3a" style="left:1116.0px;top:729px;font-size:18px;line-height:23px;color:#252525;letter-spacing:0.322px;">City centre location close to</div>
<div class="t" id="c3b" style="left:1115.2px;top:759px;font-size:18px;line-height:23px;color:#252525;letter-spacing:0.382px;">Spinningfields, with plenty of caf&eacute;s,</div>
<div class="t" id="c3c" style="left:1115.2px;top:789px;font-size:18px;line-height:23px;color:#252525;letter-spacing:0.411px;">restaurants, and shops nearby, as</div>
<div class="t" id="c3d" style="left:1116.0px;top:819px;font-size:18px;line-height:23px;color:#252525;letter-spacing:0.464px;">well as excellent public transport</div>
<div class="t" id="c3e" style="left:1115.2px;top:849px;font-size:18px;line-height:23px;color:#252525;letter-spacing:0.215px;">links.</div>
<div class="t" id="m1" style="left:903.7px;top:139px;font-size:14px;line-height:18px;color:#000;font-weight:700;letter-spacing:-0.510px;">Centurion House Deansgate</div>
<div class="t" id="m2" style="left:903.7px;top:162px;font-size:12px;line-height:16px;color:#5a5a5a;letter-spacing:-0.139px;">129 Deansgate, Manchester M3 3WR</div>
<div class="t" id="m3" style="left:903.7px;top:196px;font-size:12px;line-height:16px;color:#2f66c9;letter-spacing:-0.040px;">View larger map</div>
<div class="t" id="m4" style="left:1120.3px;top:166px;font-size:12px;line-height:16px;color:#2f66c9;letter-spacing:0.057px;">Directions</div>
</body>
</html>
